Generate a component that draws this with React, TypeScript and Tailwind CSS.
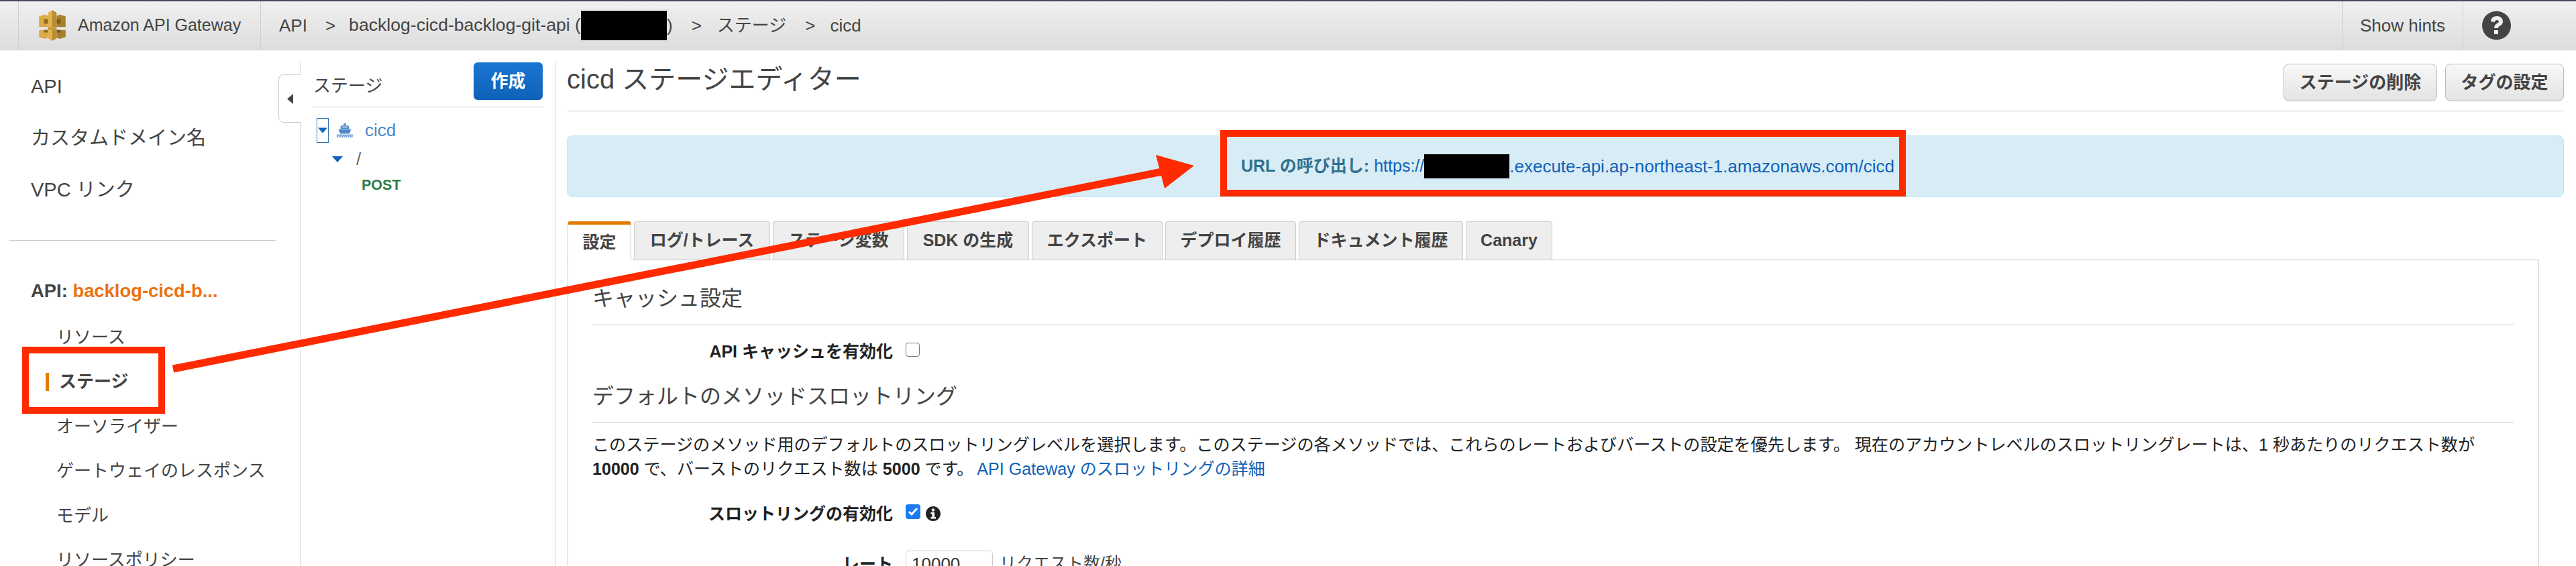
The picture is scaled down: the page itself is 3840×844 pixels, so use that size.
import React from "react";

const font = { fontFamily: '"Liberation Sans", "Noto Sans CJK JP", sans-serif' };

const navTop = ["API", "カスタムドメイン名", "VPC リンク"];
const navApi = ["リソース", "ステージ", "オーソライザー", "ゲートウェイのレスポンス", "モデル", "リソースポリシー"];
const tabs = [
  { label: "ログ/トレース", w: "w-[203px]" },
  { label: "ステージ変数", w: "w-[196px]" },
  { label: "SDK の生成", w: "w-[182px]" },
  { label: "エクスポート", w: "w-[195px]" },
  { label: "デプロイ履歴", w: "w-[195px]" },
  { label: "ドキュメント履歴", w: "w-[245px]" },
  { label: "Canary", w: "w-[129px]" },
];

function GatewayLogo() {
  return (
    <svg width="40" height="46" viewBox="0 0 118 137">
      {/* side blocks */}
      <path d="M0 28l26-8 14 6v50H0z" fill="#dcaa44" />
      <path d="M78 26l14-6 26 8v48H78z" fill="#a9802c" />
      <path d="M0 88h40v34l-14 6-26-8z" fill="#dcaa44" />
      <path d="M78 88h40v32l-26 8-14-6z" fill="#a9802c" />
      {/* notches and bars */}
      <path d="M22 40h18v20H22zM22 100h18v-20H22z" fill="#8c6a1e" />
      <path d="M78 40h18v20H78zM78 100h18v-20H78z" fill="#7c5c1a" />
      {/* centre column */}
      <path d="M40 12L59 0v137L40 125z" fill="#e3b24c" />
      <path d="M59 0l19 12v113l-19 12z" fill="#b78c32" />
      <path d="M0 76h118v12H0z" fill="#e8e8e8" />
      <path d="M40 76h38v12H40z" fill="#c4962f" />
    </svg>
  );
}

function ShipIcon() {
  return (
    <svg width="24" height="22" viewBox="0 0 72 66" fill="#4a86c8">
      <rect x="31" y="0" width="10" height="7" />
      <path d="M17 12q19-8 38 0v12H17z" />
      <path d="M8 26h56l-7 20H15z" />
      <rect x="23" y="14" width="26" height="4" fill="white" />
      <rect x="0" y="50" width="72" height="5" />
      <path d="M0 60h72" stroke="#4a86c8" strokeWidth="5" strokeDasharray="7 3" />
    </svg>
  );
}

function Caret({ className }: { className: string }) {
  return (
    <svg width="16" height="9" viewBox="0 0 16 9" className={className}>
      <path d="M0 0h16L8 9z" fill="#1166bb" />
    </svg>
  );
}

function Header() {
  return (
    <header className="flex h-[75px] border-t-2 border-b border-t-[#434a59] border-b-[#d0d0d0] bg-gradient-to-b from-[#f0f0f0] to-[#dddddd] text-[26px] text-[#444444]">
      <div className="flex w-[389px] shrink-0 items-center pl-[27px]">
        <div className="flex h-full w-full items-center border-x border-[#cfcfcf] pl-[30px]">
          <GatewayLogo />
          <span className="ml-[18px] whitespace-nowrap text-[25px]">Amazon API Gateway</span>
        </div>
      </div>
      <div className="flex flex-1 items-center whitespace-nowrap pl-[27px]">
        <span>API</span>
        <span className="ml-[27px]">&gt;</span>
        <span className="ml-[20px] text-[26.6px]">backlog-cicd-backlog-git-api (</span>
        <span className="h-[44px] w-[128px] bg-black" />
        <span>)</span>
        <span className="ml-[28px]">&gt;</span>
        <span className="ml-[23px]">ステージ</span>
        <span className="ml-[28px]">&gt;</span>
        <span className="ml-[22px]">cicd</span>
      </div>
      <div className="flex h-full w-[181px] shrink-0 items-center justify-center border-x border-[#cfcfcf]">Show hints</div>
      <div className="flex w-[168px] shrink-0 items-center pl-[28px]">
        <svg width="43" height="44" viewBox="0 0 43 44">
          <circle cx="21.5" cy="22" r="21.5" fill="#444444" />
          <path d="M13 16c0-5 4-8 9-8s9 3 9 8c0 4-3 6-5 7-2 1-2 2-2 3h-6c0-3 1-5 4-7 2-1 3-2 3-3 0-1-1-2-3-2s-3 1-3 3z" fill="#eeeeee" />
          <rect x="18" y="29" width="6" height="6" fill="#eeeeee" />
        </svg>
      </div>
    </header>
  );
}

function Sidebar() {
  return (
    <aside className="w-[448px] shrink-0 pt-[16px] text-[#444444]">
      {navTop.map((item) => (
        <div key={item} className="flex h-[77px] items-center pl-[46px] text-[29px]">{item}</div>
      ))}
      <div className="ml-[14px] mt-[36px] w-[398px] border-t border-[#cccccc]" />
      <div className="mt-[42px] flex h-[66px] items-center whitespace-nowrap pl-[46px] text-[27.4px] font-bold">
        API:&nbsp;<span className="text-[#ec7211]">backlog-cicd-b...</span>
      </div>
      <div className="mt-[3px]">
        {navApi.map((item) =>
          item === "ステージ" ? (
            <div key={item} className="flex h-[66.5px] items-center pl-[68px] text-[26px] font-bold">
              <span className="h-[27px] w-[5px] bg-[#e07b00]" />
              <span className="ml-[15px]">{item}</span>
            </div>
          ) : (
            <div key={item} className="flex h-[66.5px] items-center pl-[84px] text-[26px]">{item}</div>
          )
        )}
      </div>
    </aside>
  );
}

function StagePane() {
  return (
    <section className="relative mt-[18px] w-[379px] shrink-0 border-l border-[#cccccc] pl-[18px] pr-[18px]">
      <div className="absolute left-[-34px] top-[18px] flex h-[72px] w-[34px] items-center rounded-l-[8px] border border-r-0 border-[#cccccc] bg-white pl-[12px]">
        <svg width="9" height="15" viewBox="0 0 9 15"><path d="M9 0v15L0 7.5z" fill="#444444" /></svg>
      </div>
      <div className="flex h-[67px] items-start justify-between border-b border-[#cccccc]">
        <span className="mt-[20px] text-[26px] leading-[30px] text-[#444444]">ステージ</span>
        <button className="h-[56px] w-[103px] rounded-[6px] bg-gradient-to-b from-[#1a75d2] to-[#0f62b8] text-[26px] font-bold text-white">作成</button>
      </div>
      <div className="mt-[15px] flex items-center pl-[5px]">
        <span className="flex h-[37px] w-[18px] items-center justify-center border border-[#2f6fad]">
          <Caret className="w-[14px]" />
        </span>
        <span className="ml-[12px]"><ShipIcon /></span>
        <span className="ml-[18px] text-[26px] text-[#4a86c8]">cicd</span>
      </div>
      <div className="mt-[5px] flex h-[36px] items-center pl-[28px]">
        <Caret className="" />
        <span className="ml-[20px] text-[26px] text-[#666666]">/</span>
      </div>
      <div className="mt-[6px] pl-[72px] text-[21.500px] font-bold leading-[30px] text-[#2e7d4a]">POST</div>
    </section>
  );
}

function Field({ label, children }: { label: string; children: React.ReactNode }) {
  return (
    <div className="flex items-center">
      <span className="w-[448px] text-right text-[25px] font-bold leading-[36px] text-[#222222]">{label}</span>
      <div className="ml-[19px] flex items-center">{children}</div>
    </div>
  );
}

function SettingsPanel() {
  return (
    <div className="mr-[37px] ml-[1px] h-[600px] border-x border-[#cccccc] px-[36px]">
      <h3 className="pt-[37px] text-[32px] leading-[40px] text-[#444444]">キャッシュ設定</h3>
      <div className="mt-[19px] border-t border-[#cccccc]" />
      <div className="mt-[21px]">
        <Field label="API キャッシュを有効化">
          <span className="mb-[6px] h-[21px] w-[21px] rounded-[4px] border border-[#777777] bg-white" />
        </Field>
      </div>
      <h3 className="mt-[29px] text-[32px] leading-[40px] text-[#444444]">デフォルトのメソッドスロットリング</h3>
      <div className="mt-[18px] border-t border-[#cccccc]" />
      <p className="mt-[15px] whitespace-nowrap text-[25.1px] leading-[36px] text-[#222222]">
        このステージのメソッド用のデフォルトのスロットリングレベルを選択します。このステージの各メソッドでは、これらのレートおよびバーストの設定を優先します。 現在のアカウントレベルのスロットリングレートは、1 秒あたりのリクエスト数が
        <br />
        <b>10000</b> で、バーストのリクエスト数は <b>5000</b> です。<span className="ml-[5px] text-[#0f62b8]">API Gateway のスロットリングの詳細</span>
      </p>
      <div className="mt-[31px]">
        <Field label="スロットリングの有効化">
          <span className="mb-[6px] flex h-[22px] w-[22px] items-center justify-center rounded-[4px] bg-[#1a7cf2]">
            <svg width="16" height="14" viewBox="0 0 16 14"><path d="M2 7l4 4 8-9" fill="none" stroke="white" strokeWidth="3" /></svg>
          </span>
          <svg width="22" height="22" viewBox="0 0 22 22" className="ml-[8px]">
            <circle cx="11" cy="11" r="11" fill="#222222" />
            <circle cx="11" cy="5.500" r="2.200" fill="white" />
            <path d="M7.500 9h5.500v7h2v2.500H7.500V16h2v-4.500h-2z" fill="white" />
          </svg>
        </Field>
      </div>
      <div className="mt-[37px]">
        <Field label="レート">
          <span className="flex h-[40px] w-[130px] items-center rounded-t-[5px] border border-[#cccccc] pl-[8px] text-[26px] text-[#333333]">10000</span>
          <span className="ml-[10px] whitespace-nowrap text-[25px] text-[#444444]">リクエスト数/秒</span>
        </Field>
      </div>
    </div>
  );
}

function Content() {
  return (
    <main className="mt-[18px] min-w-0 flex-1 border-l border-[#cccccc] pl-[17px] pr-[18px]">
      <div className="flex h-[73px] items-start justify-between border-b border-[#cccccc]">
        <h1 className="whitespace-nowrap text-[40px] leading-[50px] text-[#444444]">cicd ステージエディター</h1>
        <div className="mt-[2px] flex gap-[12px]">
          <button className="h-[56px] w-[229px] rounded-[8px] border border-[#bbbbbb] bg-gradient-to-b from-[#f8f8f8] to-[#e3e3e3] text-[26px] font-bold text-[#444444]">ステージの削除</button>
          <button className="h-[56px] w-[177px] rounded-[8px] border border-[#bbbbbb] bg-gradient-to-b from-[#f8f8f8] to-[#e3e3e3] text-[26px] font-bold text-[#444444]">タグの設定</button>
        </div>
      </div>
      <div className="mt-[36px] flex h-[92px] items-center rounded-[8px] border border-[#bce8f1] bg-[#d8ecf5] pl-[1004px] text-[25px]">
        <b className="text-[#31708f]">URL の呼び出し:</b>
        <span className="ml-[7px] text-[#0f62b8]">https://</span>
        <span className="h-[36px] w-[127px] bg-black" />
        <span className="text-[26px] text-[#0f62b8]">.execute-api.ap-northeast-1.amazonaws.com/cicd</span>
      </div>
      <div className="mr-[37px] mt-[36px] flex gap-[4px] border-b border-[#cccccc]">
        <div className="mb-[-1px] ml-[1px] flex h-[58px] w-[95px] items-center justify-center rounded-t-[4px] border-x border-t-[5px] border-x-[#cccccc] border-t-[#e07b00] bg-white text-[25px] font-bold text-[#444444]">設定</div>
        {tabs.map((tab) => (
          <div key={tab.label} className={`flex h-[57px] ${tab.w} items-center justify-center whitespace-nowrap rounded-t-[4px] border border-b-0 border-[#cccccc] bg-[#eeeeee] text-[25px] font-bold text-[#444444]`}>
            {tab.label}
          </div>
        ))}
      </div>
      <SettingsPanel />
    </main>
  );
}

export default function App() {
  return (
    <div className="relative h-[844px] w-[3840px] overflow-hidden bg-white" style={font}>
      <Header />
      <div className="flex">
        <Sidebar />
        <StagePane />
        <Content />
      </div>
      {/* red annotations drawn over the screenshot */}
      <div className="absolute left-[33px] top-[517px] h-[100px] w-[213px] border-[10px] border-[#ff2a00]" />
      <div className="absolute left-[1819px] top-[194px] h-[99px] w-[1022px] border-[10px] border-[#ff2a00]" />
      <svg className="absolute left-0 top-0" width="3840" height="844">
        <path d="M258 550L1732 256" stroke="#ff2a00" strokeWidth="11" fill="none" />
        <path d="M1723 231L1780 247L1736 281Z" fill="#ff2a00" />
      </svg>
    </div>
  );
}
